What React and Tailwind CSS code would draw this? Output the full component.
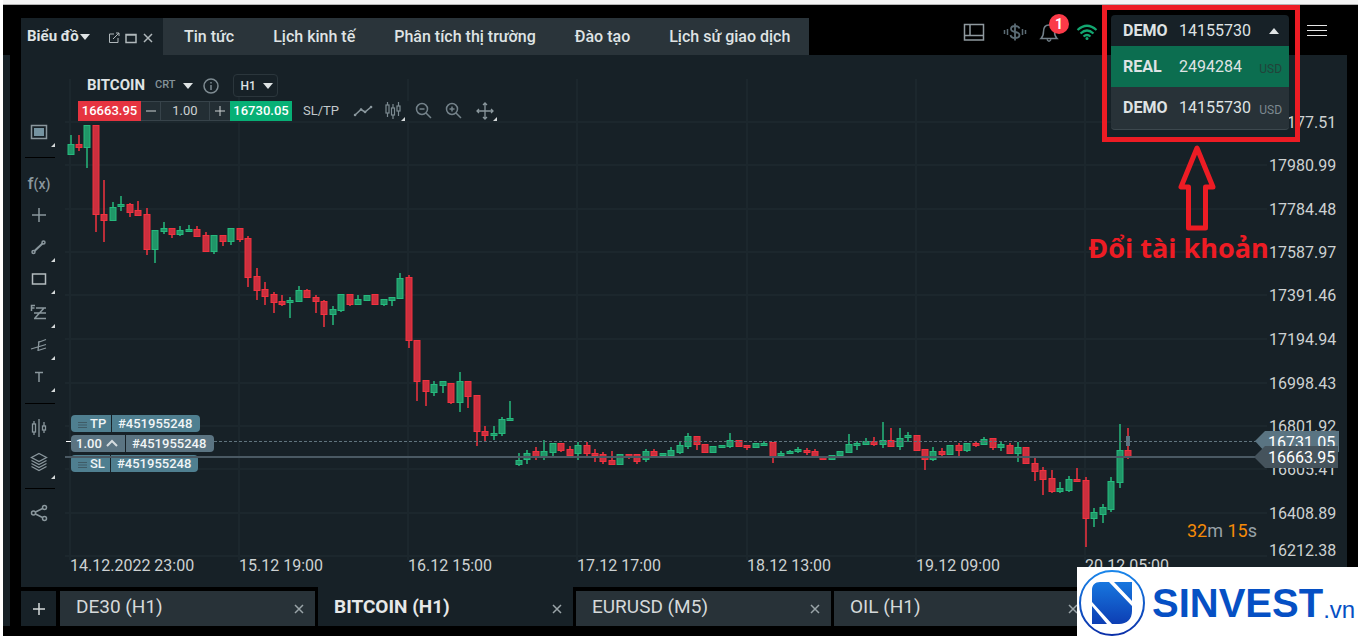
import { useState } from 'react';

// [direction, high, top, bottom, low]
const candles = [
  ['g', 135, 144, 155, 155], ['r', 135, 144, 148, 151], ['g', 125, 125, 148, 168], ['r', 125, 125, 215, 232],
  ['r', 180, 214, 221, 242], ['g', 202, 207, 221, 221], ['g', 196, 204, 207, 211], ['r', 203, 204, 213, 217],
  ['r', 201, 210, 216, 216], ['r', 208, 214, 250, 255], ['g', 230, 230, 250, 263], ['g', 222, 228, 232, 234],
  ['r', 228, 228, 235, 238], ['g', 226, 230, 235, 236], ['g', 225, 229, 232, 232], ['r', 226, 229, 237, 237],
  ['r', 232, 235, 252, 252], ['g', 235, 235, 252, 254], ['r', 235, 235, 242, 246], ['g', 228, 228, 242, 245],
  ['r', 228, 228, 240, 242], ['r', 236, 238, 278, 287], ['r', 268, 276, 291, 300], ['r', 282, 289, 297, 305],
  ['r', 292, 294, 303, 313], ['r', 295, 301, 305, 306], ['g', 297, 300, 303, 318], ['g', 286, 290, 302, 302],
  ['r', 289, 290, 298, 298], ['r', 295, 297, 302, 313], ['r', 300, 301, 315, 327], ['g', 306, 309, 315, 325],
  ['g', 294, 294, 311, 312], ['r', 294, 294, 305, 306], ['g', 295, 299, 305, 305], ['g', 295, 295, 301, 301],
  ['r', 294, 294, 305, 305], ['g', 299, 299, 305, 306], ['g', 297, 297, 301, 306], ['g', 273, 278, 299, 299],
  ['r', 275, 277, 341, 348], ['r', 340, 340, 382, 401], ['r', 380, 380, 392, 406], ['g', 381, 384, 393, 396],
  ['g', 381, 381, 386, 393], ['r', 383, 383, 403, 404], ['g', 372, 381, 403, 412], ['r', 381, 381, 397, 408],
  ['r', 395, 395, 432, 446], ['r', 426, 431, 436, 442], ['g', 426, 433, 436, 440], ['g', 417, 419, 434, 436],
  ['g', 401, 418, 421, 421], ['g', 453, 460, 465, 466], ['g', 450, 453, 460, 464], ['r', 447, 451, 458, 460],
  ['g', 440, 451, 458, 460], ['g', 443, 443, 453, 458], ['r', 443, 443, 451, 452], ['r', 446, 449, 456, 458],
  ['g', 442, 445, 454, 460], ['r', 442, 445, 454, 456], ['r', 449, 453, 456, 462], ['r', 452, 454, 462, 464],
  ['r', 451, 460, 465, 465], ['g', 454, 454, 465, 465], ['r', 454, 454, 457, 459], ['r', 454, 454, 462, 464],
  ['g', 449, 451, 460, 462], ['r', 449, 451, 456, 456], ['g', 453, 453, 456, 456], ['g', 447, 450, 456, 456],
  ['g', 441, 445, 453, 454], ['g', 433, 436, 447, 449], ['r', 436, 436, 445, 450], ['r', 444, 444, 453, 453],
  ['g', 446, 446, 453, 453], ['g', 445, 445, 448, 448], ['g', 433, 440, 447, 448], ['r', 440, 440, 447, 447],
  ['r', 445, 445, 448, 450], ['g', 443, 443, 448, 448], ['g', 441, 443, 446, 446], ['r', 442, 442, 457, 463],
  ['g', 451, 453, 456, 456], ['g', 450, 451, 454, 454], ['g', 447, 449, 452, 453], ['r', 448, 450, 453, 455],
  ['r', 449, 451, 458, 458], ['r', 457, 457, 460, 460], ['g', 455, 455, 460, 460], ['g', 451, 451, 456, 458],
  ['g', 434, 444, 453, 453], ['g', 441, 443, 446, 450], ['g', 438, 441, 445, 445], ['r', 437, 441, 445, 446],
  ['g', 422, 440, 445, 448], ['r', 428, 440, 447, 447], ['g', 428, 438, 447, 450], ['g', 432, 435, 438, 442],
  ['r', 435, 435, 451, 451], ['r', 449, 449, 460, 470], ['g', 447, 451, 460, 461], ['r', 448, 451, 455, 456],
  ['g', 445, 445, 455, 455], ['r', 443, 445, 451, 456], ['g', 443, 443, 451, 452], ['r', 441, 443, 446, 447],
  ['g', 437, 439, 445, 445], ['r', 438, 438, 448, 450], ['g', 442, 444, 448, 451], ['r', 443, 445, 454, 454],
  ['g', 442, 447, 454, 462], ['r', 447, 447, 464, 464], ['r', 457, 463, 472, 481], ['r', 467, 470, 480, 495],
  ['r', 470, 478, 492, 493], ['g', 482, 488, 492, 493], ['g', 476, 479, 491, 492], ['r', 468, 479, 482, 482],
  ['r', 477, 480, 519, 547], ['g', 508, 512, 519, 527], ['g', 504, 507, 515, 523], ['g', 477, 481, 510, 512],
  ['g', 424, 450, 483, 488], ['r', 428, 450, 457, 459],
];

const prices = [
  [122, '18177.51'], [165, '17980.99'], [209, '17784.48'], [252, '17587.97'], [295, '17391.46'], [339, '17194.94'],
  [383, '16998.43'], [426, '16801.92'], [469, '16605.41'], [513, '16408.89'], [550, '16212.38'],
];

const times = [
  [70, '14.12.2022 23:00'], [239, '15.12 19:00'], [408, '16.12 15:00'], [577, '17.12 17:00'],
  [747, '18.12 13:00'], [916, '19.12 09:00'], [1085, '20.12 05:00'],
];

const colors = {
  g: { fill: '#209668', stroke: '#26b97d' },
  r: { fill: '#cc2f3e', stroke: '#f2323f' },
};

function Caret({ up, className = '' }) {
  return (
    <svg viewBox="0 0 10 6" className={`h-[6px] w-[10px] shrink-0 fill-[#dfe3e4] ${className}`}>
      <path d={up ? 'M0 6 5 0 10 6Z' : 'M0 0h10L5 6Z'} />
    </svg>
  );
}

function OrderLabel({ y, split, end, left, id, color, handle }) {
  return (
    <g>
      <path d={`M75 ${y}H${split}v17H75a4 4 0 0 1-4-4v-9a4 4 0 0 1 4-4Z`} fill={color} />
      <path d={`M${split + 1} ${y}H${end - 4}a4 4 0 0 1 4 4v9a4 4 0 0 1-4 4H${split + 1}Z`} fill={color} />
      {handle ? (
        <>
          <path d={`M78 ${y + 7.5}h9M78 ${y + 10}h9M78 ${y + 12.5}h9`} stroke="#3f5b66" strokeWidth="1" />
          <text x="90" y={y + 13} fontSize="13" fontWeight="500" fill="#f1f5f6">{left}</text>
        </>
      ) : (
        <>
          <text x="76" y={y + 13} fontSize="13" fontWeight="500" fill="#f1f5f6">{left}</text>
          <path d={`m107 ${y + 11} 5-5 5 5`} fill="none" stroke="#d5dcdf" strokeWidth="2" />
        </>
      )}
      <text x={split + 7} y={y + 13} fontSize="13" fontWeight="500" fill="#f1f5f6">{id}</text>
    </g>
  );
}

function Chart() {
  return (
    <svg viewBox="65 55 1282 532" className="block w-full">
      <g stroke="#1c272d" strokeWidth="2">
        {prices.map(([y], i) => (
          <path key={y} d={`M65 ${i === 10 ? 556 : y}H1267`} />
        ))}
        {times.map(([x]) => (
          <path key={x} d={`M${x} 79V560`} />
        ))}
      </g>

      {candles.map(([dir, high, top, bottom, low], i) => {
        const x = Math.round(70.5 + i * 8.46);
        return (
          <g key={i} stroke={colors[dir].stroke}>
            <path d={`M${x} ${high}V${low}`} strokeWidth="1.5" />
            <rect x={x - 3} y={top + 0.5} width="6" height={Math.max(bottom - top - 1, 2)} fill={colors[dir].fill} />
          </g>
        );
      })}
      <rect x="1126" y="436" width="4" height="10" fill="#5a7482" />

      {/* Order lines */}
      <path d="M66 441.5H71" stroke="#fff" />
      <path d="M214 441.5H1256" stroke="#61747e" strokeDasharray="3 2" />
      <OrderLabel y={415} split={111} end={200} left="TP" id="#451955248" color="#4f7f90" handle />
      <OrderLabel y={435} split={125} end={214} left="1.00" id="#451955248" color="#5b7482" />
      <OrderLabel y={455} split={110} end={198} left="SL" id="#451955248" color="#4f7f90" handle />
      <path d="M65 457H1256" stroke="#4a5963" strokeWidth="2" />

      {/* Axis labels */}
      <g fontSize="16" fill="#cdd1d2">
        {prices.map(([y, label]) => (
          <text key={label} x="1269" y={y + 6}>{label}</text>
        ))}
        {times.map(([x, label]) => (
          <text key={label} x={x} y="571">{label}</text>
        ))}
      </g>
      <path d="M1255 441 1265 431H1339V452H1265Z" fill="#5a7482" />
      <text x="1268" y="448" fontSize="16" fill="#fff">16731.05</text>
      <path d="M1254 457 1265 446H1338V468H1265Z" fill="#45535c" />
      <text x="1268" y="463" fontSize="16" fill="#fff">16663.95</text>

      <text x="1187" y="537" fontSize="18" fill="#98a2a8">
        <tspan fill="#f58a07">32</tspan>m <tspan fill="#f58a07">15</tspan>s
      </text>
    </svg>
  );
}

function ToolButton({ label, corner, className = 'h-8', children }) {
  return (
    <button type="button" aria-label={label} className={`relative flex w-9 shrink-0 items-center justify-center ${className}`}>
      <svg viewBox="0 0 20 20" className="h-5 w-5 fill-none stroke-[#8a979d]" strokeWidth="1.5">
        {children}
      </svg>
      {corner && (
        <svg viewBox="0 0 4 4" className="absolute right-[2px] bottom-[1px] h-1 w-1 fill-[#d5d9da]">
          <path d="M4 0V4H0Z" />
        </svg>
      )}
    </button>
  );
}

function Toolbar() {
  return (
    <aside className="flex w-11 shrink-0 flex-col pt-[61px]">
      <ToolButton label="Panel" corner>
        <rect x="2.5" y="3.5" width="15" height="13" />
        <rect x="5" y="6" width="10" height="8" fill="#7593a0" stroke="none" />
      </ToolButton>
      <div className="my-[9px] ml-1 h-px w-[30px] bg-black" />
      <button type="button" className="h-8 w-9 text-[17px] leading-8 font-medium text-[#8a979d]">
        f<span className="text-[14px]">(x)</span>
      </button>
      <ToolButton label="Crosshair"><path d="M10 3V17M3 10H17" /></ToolButton>
      <ToolButton label="Trend line" corner>
        <circle cx="4.5" cy="15" r="1.5" />
        <circle cx="14.5" cy="5.500" r="1.5" />
        <path d="M5.5 14 13.5 6.5" strokeWidth="2" />
      </ToolButton>
      <ToolButton label="Rectangle" corner><rect x="3.5" y="5" width="13" height="10" stroke="#b4bcbf" /></ToolButton>
      <ToolButton label="Fibonacci" corner className="h-[34px]">
        <path d="M2.5 9V3.5H6M2.500 6H5.5" strokeWidth="1.5" />
        <path d="M7 6H17M5 11H17M5 16.5H17M6 16 15 6" />
      </ToolButton>
      <ToolButton label="Pitchfork" corner>
        <path d="M2 14 17 9.5M9 7.5 17 4.5M9 15.500 17 13M10 6 9 16" strokeWidth="1.3" />
      </ToolButton>
      <ToolButton label="Text" corner><path d="M6 5.5H14M10 5.5V15" /></ToolButton>
      <div className="mt-[10px] mb-2 ml-1 h-px w-[30px] bg-black" />
      <ToolButton label="Candle width">
        <path d="M5 3V6M5 14V17M10 1V19M15 4V8M15 12V15" strokeWidth="1.3" />
        <rect x="3.5" y="6" width="3" height="8" strokeWidth="1.3" />
        <rect x="13.5" y="8" width="3" height="4" strokeWidth="1.3" />
      </ToolButton>
      <ToolButton label="Layers" corner className="h-9">
        <path d="M10 1.5 17.5 5.5 10 9.5 2.5 5.5ZM2.5 8.5 10 12.5 17.5 8.5M2.5 11.5 10 15.5 17.5 11.5M2.5 14.5 10 18.5 17.5 14.5" strokeWidth="1.3" />
      </ToolButton>
      <div className="my-2 ml-1 h-px w-[30px] bg-black" />
      <ToolButton label="Share">
        <circle cx="4.5" cy="10" r="2" />
        <circle cx="15.5" cy="4.5" r="2" />
        <circle cx="15.5" cy="15.5" r="2" />
        <path d="m6.5 9 7-3.5M6.5 11l7 3.5" />
      </ToolButton>
    </aside>
  );
}

function ChartHeader() {
  const [volume, setVolume] = useState('1.00');

  return (
    <div className="absolute top-[19px] left-[13px] flex flex-col items-start gap-1 text-[#dfe3e4]">
      <div className="flex h-[23px] items-center bg-[#172127] pl-[9px]">
        <button type="button" className="flex items-center text-[15px] font-bold">
          BITCOIN
          <span className="ml-[10px] text-[11px] font-medium text-[#849299]">CRT</span>
          <Caret className="ml-2" />
        </button>
        <button type="button" aria-label="Instrument info" className="ml-[10px]">
          <svg viewBox="0 0 16 16" className="h-4 w-4 fill-none stroke-[#7e8b92]" strokeWidth="1.5">
            <circle cx="8" cy="8" r="7" />
            <path d="M8 7V12M8 4V5.5" />
          </svg>
        </button>
        <label className="relative ml-[14px] flex items-center">
          <select aria-label="Interval" className="h-[23px] w-[45px] appearance-none rounded border border-[#2b363c] bg-transparent pl-[6px] text-[12px] font-medium">
            <option>H1</option>
          </select>
          <Caret className="absolute right-[5px]" />
        </label>
      </div>

      <div className="flex h-5 items-center bg-[#172127]">
        <button type="button" className="h-5 w-[63px] bg-[#e63440] text-[13px] font-medium text-white">16663.95</button>
        <div className="flex h-5 w-[89px] border-y border-[#37434a] bg-[#232e34] text-[#cdd1d2]">
          <button type="button" aria-label="Decrease volume" className="flex w-[19px] items-center justify-center">
            <svg viewBox="0 0 10 10" className="h-[10px] w-[10px] stroke-current"><path d="M0 5H10" /></svg>
          </button>
          <input
            aria-label="Volume"
            value={volume}
            onChange={(e) => setVolume(e.target.value)}
            className="w-[50px] border-x border-[#37434a] bg-transparent text-center text-[13px] outline-none"
          />
          <button type="button" aria-label="Increase volume" className="flex w-5 items-center justify-center">
            <svg viewBox="0 0 10 10" className="h-[10px] w-[10px] stroke-current"><path d="M0 5H10M5 0V10" /></svg>
          </button>
        </div>
        <button type="button" className="h-5 w-[62px] bg-[#07b076] text-[13px] font-medium text-white">16730.05</button>
        <button type="button" className="ml-[11px] w-[36px] text-[13px] text-[#c3c9cb]">SL/TP</button>
        <div className="ml-[14px] flex items-center gap-[10px]">
          <button type="button" aria-label="Line chart">
            <svg viewBox="0 0 20 20" className="h-5 w-5 fill-none stroke-[#8a979d]" strokeWidth="1.5">
              <path d="M2 14 8 8.5 12 11 18 6" />
              <path d="M2 14h.1M8 8.5h.1M12 11h.1M18 6h.1" strokeWidth="2.5" strokeLinecap="round" />
            </svg>
          </button>
          <button type="button" aria-label="Chart type" className="relative">
            <svg viewBox="0 0 20 20" className="h-5 w-5 fill-none stroke-[#7c8a91]" strokeWidth="1.2">
              <path d="M4.5 1V4M4.5 12V16M10 3V7M10 14V18M15.5 1V5M15.5 10V15" />
              <rect x="3" y="4" width="3" height="8" />
              <rect x="8.5" y="7" width="3" height="7" />
              <rect x="14" y="5" width="3" height="5" />
            </svg>
            <svg viewBox="0 0 4 4" className="absolute -right-[2px] bottom-0 h-1 w-1 fill-[#d5d9da]"><path d="M4 0V4H0Z" /></svg>
          </button>
          <button type="button" aria-label="Zoom out">
            <svg viewBox="0 0 20 20" className="h-5 w-5 fill-none stroke-[#74828a]" strokeWidth="1.5">
              <circle cx="9" cy="8" r="5.5" /><path d="m13 12 5 5M6.5 8h5" />
            </svg>
          </button>
          <button type="button" aria-label="Zoom in">
            <svg viewBox="0 0 20 20" className="h-5 w-5 fill-none stroke-[#74828a]" strokeWidth="1.5">
              <circle cx="9" cy="8" r="5.5" /><path d="m13 12 5 5M6.5 8h5M9 5.5v5" />
            </svg>
          </button>
          <button type="button" aria-label="Move" className="relative ml-[2px]">
            <svg viewBox="0 0 20 20" className="h-5 w-5 fill-none stroke-[#8a979d]" strokeWidth="1.3">
              <path d="M10 2V18M2 10H18M8 4l2-2 2 2M8 16l2 2 2-2M4 8l-2 2 2 2M16 8l2 2-2 2" />
            </svg>
            <svg viewBox="0 0 4 4" className="absolute -right-[2px] bottom-0 h-1 w-1 fill-[#d5d9da]"><path d="M4 0V4H0Z" /></svg>
          </button>
        </div>
      </div>
    </div>
  );
}

function AccountMenu() {
  return (
    <div className="relative z-10 mr-[18px] w-[178px] text-[16px] leading-5 text-[#dfe3e4]">
      <button type="button" aria-expanded="true" className="flex h-[31px] w-full items-center rounded-t bg-[#172127] pl-3">
        <span className="w-14 text-left font-bold">DEMO</span>
        14155730
        <Caret up className="ml-auto mr-[10px]" />
      </button>
      <ul className="absolute top-[31px] left-0 w-full overflow-hidden rounded-b border-b border-[#3d484e] bg-[#283238]">
        <li>
          <button type="button" className="flex h-[41px] w-full items-center bg-[#0c6e50] pr-[7px] pl-3">
            <span className="w-14 text-left font-bold">REAL</span>
            2494284
            <span className="ml-auto pt-1 text-[12px] text-[#22433a]">USD</span>
          </button>
        </li>
        <li>
          <button type="button" className="flex h-[42px] w-full items-center pr-[7px] pl-3">
            <span className="w-14 text-left font-bold">DEMO</span>
            14155730
            <span className="ml-auto pt-1 text-[12px] text-[#7d898f]">USD</span>
          </button>
        </li>
      </ul>

      {/* Callout around the account list */}
      <div className="pointer-events-none absolute -top-[10px] -left-[9px] h-[137px] w-[198px] border-[5px] border-[#ed1c24]" />
      <div className="pointer-events-none absolute top-[130px] -left-[23px] flex w-[181px] flex-col items-center">
        <svg viewBox="0 0 40 88" className="ml-[37px] h-[88px] w-10 fill-none stroke-[#ed1c24]" strokeWidth="5" strokeLinejoin="round">
          <path d="M20 3 4 42H11.5V83H28.5V42H36Z" />
        </svg>
        <p className="-mt-[3px] font-['Open_Sans',sans-serif] text-[27px] leading-9 font-bold whitespace-nowrap text-[#ed1c24]">Đổi tài khoản</p>
      </div>
    </div>
  );
}

function Header() {
  return (
    <header className="flex h-[50px] bg-black pl-[18px] text-[#dfe3e4]">
      <nav className="mt-[13px] flex text-[16px] font-medium">
        <div className="flex w-[142px] items-center bg-[#172127] pl-[6px]">
          <button type="button" className="flex items-center text-[15px] font-bold whitespace-nowrap">
            Biểu đồ<Caret className="ml-px" />
          </button>
          <div className="mt-[2px] ml-auto flex items-center gap-[5px] pr-[9px] text-[#b0b8bb]">
            <button type="button" aria-label="Detach">
              <svg viewBox="0 0 12 12" className="h-3 w-3 fill-none stroke-current"><path d="M6 2H1.5V10.5H10V6M5 7 11 1M8 1H11V4" /></svg>
            </button>
            <button type="button" aria-label="Maximize">
              <svg viewBox="0 0 12 12" className="h-3 w-3 fill-none stroke-current"><path d="M1 2.5H11V10.5H1ZM1 3H11" strokeWidth="1.5" /></svg>
            </button>
            <button type="button" aria-label="Close">
              <svg viewBox="0 0 12 12" className="h-3 w-3 fill-none stroke-current" strokeWidth="1.5"><path d="m2 2 8 8M10 2l-8 8" /></svg>
            </button>
          </div>
        </div>
        <div className="flex items-center gap-[39px] bg-[#2a343a] pr-[19px] pl-[21px] whitespace-nowrap">
          {['Tin tức', 'Lịch kinh tế', 'Phân tích thị trường', 'Đào tạo', 'Lịch sử giao dịch'].map((tab) => (
            <a key={tab} href="#">{tab}</a>
          ))}
        </div>
      </nav>

      <div className="ml-auto flex items-start pt-[10px]">
        <div className="mt-[6px] mr-[13px] flex items-center">
          <button type="button" aria-label="Layout">
            <svg viewBox="0 0 22 22" className="h-[22px] w-[22px] fill-none stroke-[#8f999e]" strokeWidth="1.5">
              <path d="M1.5 3.5H20.5V19H1.5ZM7 3.5V14.5M1.5 14.5H20.5" />
            </svg>
          </button>
          <button type="button" aria-label="Deposit" className="ml-[18px]">
            <svg viewBox="0 0 24 22" className="h-[22px] w-6 fill-none stroke-[#5b6b74]" strokeWidth="1.8">
              <path d="M16.5 7.5C16 5.5 14.5 5 12 5 9.5 5 8 6 8 8 8 12.5 16.5 9.5 16.5 14 16.5 16 14.5 17 12 17 9.5 17 8 16.5 7.5 14M12 2.5V19.5" />
              <path d="M1.5 9v4M4.5 8v6M19.5 8v6M22.5 9v4" strokeWidth="1.5" />
            </svg>
          </button>
          <button type="button" aria-label="Notifications" className="relative ml-[12px]">
            <svg viewBox="0 0 20 22" className="h-[22px] w-5 fill-none stroke-[#74818a]" strokeWidth="1.5">
              <path d="M2 17.5C4 15.5 4.5 14 4.5 10.5 4.5 6 6.5 4 10 4S15.5 6 15.5 10.5C15.5 14 16 15.5 18 17.5ZM8 18.5Q10 22 12 18.5" />
            </svg>
            <span className="absolute -top-[7px] left-[10px] flex h-5 w-5 items-center justify-center rounded-full bg-[#fb3a48] text-[14px] font-bold text-white">1</span>
          </button>
          <svg viewBox="0 0 22 18" className="ml-[17px] h-[18px] w-[22px] fill-none stroke-[#13a670]" strokeWidth="2.2">
            <path d="M1.5 7Q11-1.5 20.5 7M4.5 10.5Q11 4.5 17.5 10.5M7.5 13.5Q11 10.5 14.5 13.5" />
            <circle cx="11" cy="15.5" r="1.5" fill="#13a670" stroke="none" />
          </svg>
        </div>
        <AccountMenu />
        <button type="button" aria-label="Menu" className="mt-[9px] mr-[31px]">
          <svg viewBox="0 0 20 13" className="h-[13px] w-5 stroke-[#e6e6e6]"><path d="M0 1.5H20M0 6.5H20M0 11.5H20" /></svg>
        </button>
      </div>
    </header>
  );
}

function CloseIcon() {
  return (
    <svg viewBox="0 0 10 10" className="h-[10px] w-[10px] stroke-[#9aa4a8]" strokeWidth="1.5"><path d="m1 1 8 8M9 1 1 9" /></svg>
  );
}

function ChartTabs() {
  const [active, setActive] = useState('BITCOIN (H1)');

  return (
    <div className="flex h-[39px] gap-[3px] bg-black text-[#d5d9da]">
      <button type="button" aria-label="Add chart" className="mt-1 mr-px flex w-[35px] items-center justify-center bg-[#172127]">
        <svg viewBox="0 0 12 12" className="h-3 w-3 stroke-[#d5d9da]"><path d="M0 6H12M6 0V12" strokeWidth="1.5" /></svg>
      </button>
      {['DE30 (H1)', 'BITCOIN (H1)', 'EURUSD (M5)', 'OIL (H1)'].map((tab) => (
        <div
          key={tab}
          className={`flex w-[255px] items-center pr-[11px] pl-4 ${tab === active ? 'bg-[#172127] font-bold' : 'mt-1 bg-[#283238]'}`}
        >
          <button
            type="button"
            onClick={() => setActive(tab)}
            className={`grow text-left text-[19px] leading-8 ${tab === active ? 'text-[#e6e8e8]' : '-mt-[3px]'}`}
          >
            {tab}
          </button>
          <button type="button" aria-label={`Close ${tab}`} className={tab === active ? 'mt-1' : ''}><CloseIcon /></button>
        </div>
      ))}
    </div>
  );
}

function Logo() {
  return (
    <div className="absolute right-0 bottom-0 flex h-[71px] w-[281px] items-center bg-white font-['Liberation_Sans',sans-serif] text-[#0650c4]">
      <svg viewBox="0 0 68 68" className="ml-[1px] h-[68px] w-[68px] shrink-0">
        <defs>
          <linearGradient id="mark" gradientUnits="userSpaceOnUse" x1="0" y1="2" x2="0" y2="66">
            <stop offset="0" stopColor="#1a86ea" />
            <stop offset="1" stopColor="#0a2fa8" />
          </linearGradient>
        </defs>
        <circle cx="34" cy="34" r="32" fill="none" stroke="url(#mark)" strokeWidth="2" />
        <path
          d="M22 13H31L54 37V42C54 50 49 55 41 55H34L14 33V21C14 16 17 13 22 13ZM36 13H54V32ZM14 37 29 55H14Z"
          fill="url(#mark)"
        />
      </svg>
      <span className="ml-[6px] text-[40px] leading-none font-bold">SINVEST</span>
      <span className="mt-[14px] text-[24px] leading-none">.vn</span>
    </div>
  );
}

export default function App() {
  return (
    <div className="relative min-h-screen overflow-hidden bg-white pb-[2px] pl-[3px] font-[Roboto,sans-serif]">
      <div className="h-[5px] border-b border-[#b4b4b4] bg-[#f4f4f4]" />
      <Header />
      <div className="flex bg-black pr-[11px] pb-[10px]">
        <div className="mr-[11px] w-[7px] shrink-0 bg-[#172127]" />
        <main className="min-w-0 flex-1">
          <section className="flex bg-[#172127]">
            <Toolbar />
            <div className="relative min-w-0 flex-1">
              <Chart />
              <ChartHeader />
            </div>
          </section>
          <ChartTabs />
        </main>
      </div>
      <Logo />
    </div>
  );
}
